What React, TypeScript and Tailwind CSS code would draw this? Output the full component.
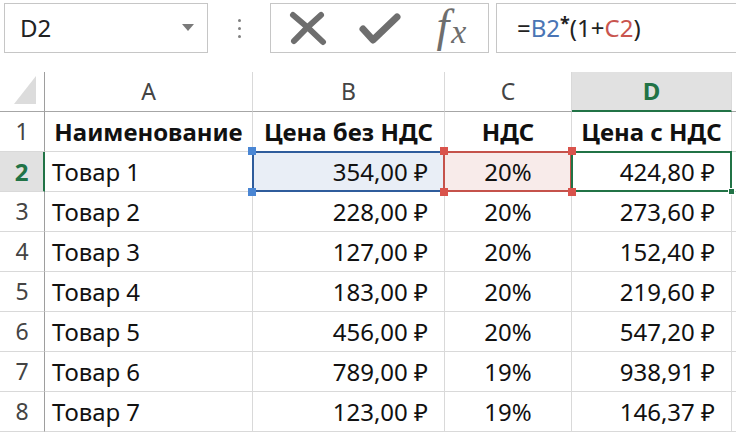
import React from 'react';

const FONT = { fontFamily: '"Noto Sans", "Open Sans", sans-serif' };

interface Row {
  n: number;
  name: string;
  price: string;
  vat: string;
  total: string;
}

const rows: Row[] = [
  { n: 3, name: 'Товар 2', price: '228,00 ₽', vat: '20%', total: '273,60 ₽' },
  { n: 4, name: 'Товар 3', price: '127,00 ₽', vat: '20%', total: '152,40 ₽' },
  { n: 5, name: 'Товар 4', price: '183,00 ₽', vat: '20%', total: '219,60 ₽' },
  { n: 6, name: 'Товар 5', price: '456,00 ₽', vat: '20%', total: '547,20 ₽' },
  { n: 7, name: 'Товар 6', price: '789,00 ₽', vat: '19%', total: '938,91 ₽' },
  { n: 8, name: 'Товар 7', price: '123,00 ₽', vat: '19%', total: '146,37 ₽' },
];

const cell = 'h-10 border-r border-b border-[#d9d9d9] flex items-center text-[24px] text-[#111] whitespace-nowrap';
const rowHead = 'h-10 border-r border-b border-r-[#9e9e9e] border-b-[#d9d9d9] flex items-center justify-center text-[23px] text-[#444]';
const colHead = 'h-10 border-r border-b border-r-[#d9d9d9] border-b-[#a6a6a6] flex items-center justify-center text-[23px] text-[#444]';

function Handle({ pos, color }: { pos: string; color: string }) {
  return <div className={`absolute w-[8px] h-[8px] z-30 ${pos} ${color}`} />;
}

export default function App() {
  return (
    <div className="w-[736px] h-[434px] bg-white overflow-hidden" style={FONT}>
      {/* formula bar */}
      <div className="h-[72px] flex items-start pt-[3px]">
        <div className="ml-[4px] w-[204px] h-[50px] border border-[#c6c6c6] flex items-center pl-[15px] pr-[13px]">
          <span className="text-[24px] text-[#222] flex-1">D2</span>
          <svg width="12" height="8" viewBox="0 0 12 8">
            <path d="M0 0 L12 0 L6 7 Z" fill="#7a7a7a" />
          </svg>
        </div>
        <div className="w-[62px] h-[50px] flex flex-col items-center justify-center gap-[5px]">
          <div className="w-[3px] h-[3px] rounded-full bg-[#808080]" />
          <div className="w-[3px] h-[3px] rounded-full bg-[#808080]" />
          <div className="w-[3px] h-[3px] rounded-full bg-[#808080]" />
        </div>
        <div className="w-[219px] h-[50px] border border-[#c6c6c6] flex items-center">
          <div className="w-[74px] flex justify-center">
            <svg width="40" height="36" viewBox="0 0 40 36">
              <path d="M5 5 Q20 17 35 32" stroke="#6e6e6e" strokeWidth="6" strokeLinecap="round" fill="none" />
              <path d="M33 5 Q18 18 6 31" stroke="#6e6e6e" strokeWidth="6" strokeLinecap="round" fill="none" />
            </svg>
          </div>
          <div className="w-[70px] flex justify-center">
            <svg width="44" height="36" viewBox="0 0 44 36">
              <path d="M5 19 L15 30 L39 7" stroke="#6e6e6e" strokeWidth="7" strokeLinecap="round" strokeLinejoin="round" fill="none" />
            </svg>
          </div>
          <div className="flex-1 flex justify-center -mt-[4px]">
            <span
              className="italic text-[#6e6e6e] leading-none flex items-end"
              style={{ fontFamily: '"Liberation Serif", "DejaVu Serif", serif' }}
            >
              <span className="text-[46px]">f</span>
              <span className="text-[34px] ml-[2px]">x</span>
            </span>
          </div>
        </div>
        <div className="ml-[7px] flex-1 h-[50px] border border-r-0 border-[#c6c6c6] flex items-center pl-[20px] text-[24px] text-[#222]">
          <span>=</span>
          <span className="text-[#4a75b5]">B2</span>
          <span className="text-[18px] font-bold -mt-[10px]">*</span>
          <span>(1+</span>
          <span className="text-[#c9554e]">C2</span>
          <span>)</span>
        </div>
      </div>

      {/* grid */}
      <div className="grid grid-cols-[45px_208px_192px_127px_160px_4px]">
        {/* column headers */}
        <div className="h-10 border-r border-b border-r-[#9e9e9e] border-b-[#a6a6a6] flex items-end justify-end pr-[8px] pb-[7px]">
          <svg width="22" height="28" viewBox="0 0 22 28">
            <path d="M22 0 L22 28 L0 28 Z" fill="#dcdcdc" />
          </svg>
        </div>
        <div className={colHead}>A</div>
        <div className={colHead}>B</div>
        <div className={colHead}>C</div>
        <div className="h-10 border-r border-r-[#d9d9d9] border-b-2 border-b-[#217346] bg-[#e1e1e1] flex items-center justify-center text-[24px] font-bold text-[#217346]">
          D
        </div>
        <div className="h-10 border-b border-b-[#a6a6a6]" />

        {/* row 1 */}
        <div className={rowHead}>1</div>
        <div className={`${cell} justify-center font-bold`}>Наименование</div>
        <div className={`${cell} justify-center font-bold`}>Цена без НДС</div>
        <div className={`${cell} justify-center font-bold`}>НДС</div>
        <div className={`${cell} justify-center font-bold`}>Цена с НДС</div>
        <div className="h-10 border-b border-[#d9d9d9]" />

        {/* row 2 */}
        <div className="h-10 border-b border-b-[#d9d9d9] border-r-2 border-r-[#217346] bg-[#e1e1e1] flex items-center justify-center text-[24px] font-bold text-[#217346]">
          2
        </div>
        <div className={`${cell} pl-[7px]`}>Товар 1</div>
        <div className={`${cell} justify-end pr-[16px] bg-[#e9eef6] relative`}>
          <div className="absolute -left-[1px] -top-[1px] -bottom-[1px] -right-[1px] border-2 border-[#2f5c9c] z-10" />
          <Handle pos="-left-[5px] -top-[5px]" color="bg-[#4a86d4]" />
          <Handle pos="-left-[5px] -bottom-[5px]" color="bg-[#4a86d4]" />
          <span className="relative z-20">354,00 ₽</span>
        </div>
        <div className={`${cell} justify-center bg-[#f8ebea] relative`}>
          <div className="absolute -left-[2px] -top-[1px] -bottom-[1px] -right-[1px] border-2 border-[#c5524b] z-10" />
          <Handle pos="-left-[5px] -top-[5px]" color="bg-[#d9534c]" />
          <Handle pos="-left-[5px] -bottom-[5px]" color="bg-[#d9534c]" />
          <Handle pos="-right-[5px] -top-[5px]" color="bg-[#d9534c]" />
          <Handle pos="-right-[5px] -bottom-[5px]" color="bg-[#d9534c]" />
          <span className="relative z-20">20%</span>
        </div>
        <div className={`${cell} justify-end pr-[16px] relative`}>
          <div className="absolute -left-[1px] -top-[1px] -bottom-[1px] -right-[1px] border-2 border-[#217346] z-10" />
          <div className="absolute -right-[4px] -bottom-[4px] w-[7px] h-[7px] bg-[#217346] border border-white z-30" />
          <span className="relative z-20">424,80 ₽</span>
        </div>
        <div className="h-10 border-b border-[#d9d9d9]" />

        {rows.map((r) => (
          <React.Fragment key={r.n}>
            <div className={rowHead}>{r.n}</div>
            <div className={`${cell} pl-[7px]`}>{r.name}</div>
            <div className={`${cell} justify-end pr-[16px]`}>{r.price}</div>
            <div className={`${cell} justify-center`}>{r.vat}</div>
            <div className={`${cell} justify-end pr-[16px]`}>{r.total}</div>
            <div className="h-10 border-b border-[#d9d9d9]" />
          </React.Fragment>
        ))}
      </div>
    </div>
  );
}
